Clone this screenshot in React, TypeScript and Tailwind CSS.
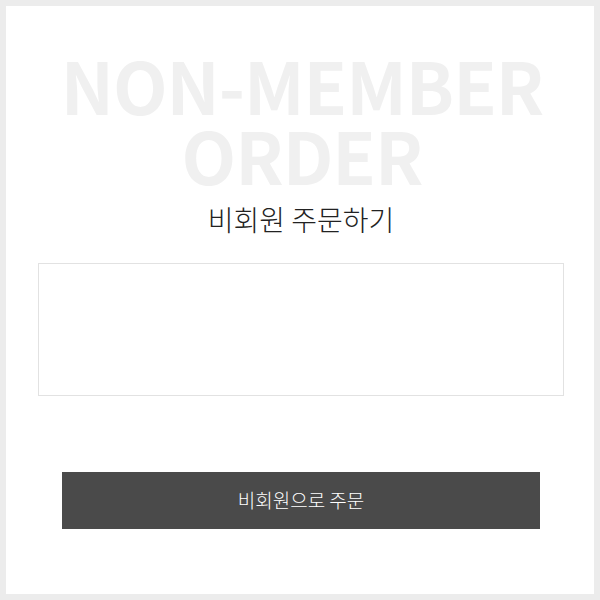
export default function App() {
  return (
    <div className="w-[600px] h-[600px] border-[6px] border-[#ececec] bg-white flex flex-col items-center font-['Noto_Sans_CJK_KR',sans-serif]">
      <div className="mt-[43px] ml-[4px] text-center font-bold text-[71px] leading-[70px] text-[#f0f0f0] tracking-[-1px]">
        <div>NON-MEMBER</div>
        <div>ORDER</div>
      </div>
      <div className="mt-[13px] ml-[2px] text-[28px] leading-[34px] font-light text-[#222222]">비회원 주문하기</div>
      <div className="ml-[2px] mt-[27px] w-[526px] h-[133px] border border-[#e2e2e2]" />
      <button className="ml-[2px] mt-[76px] w-[478px] h-[57px] bg-[#4a4a4a] text-white text-[19px] font-light">비회원으로 주문</button>
    </div>
  );
}
